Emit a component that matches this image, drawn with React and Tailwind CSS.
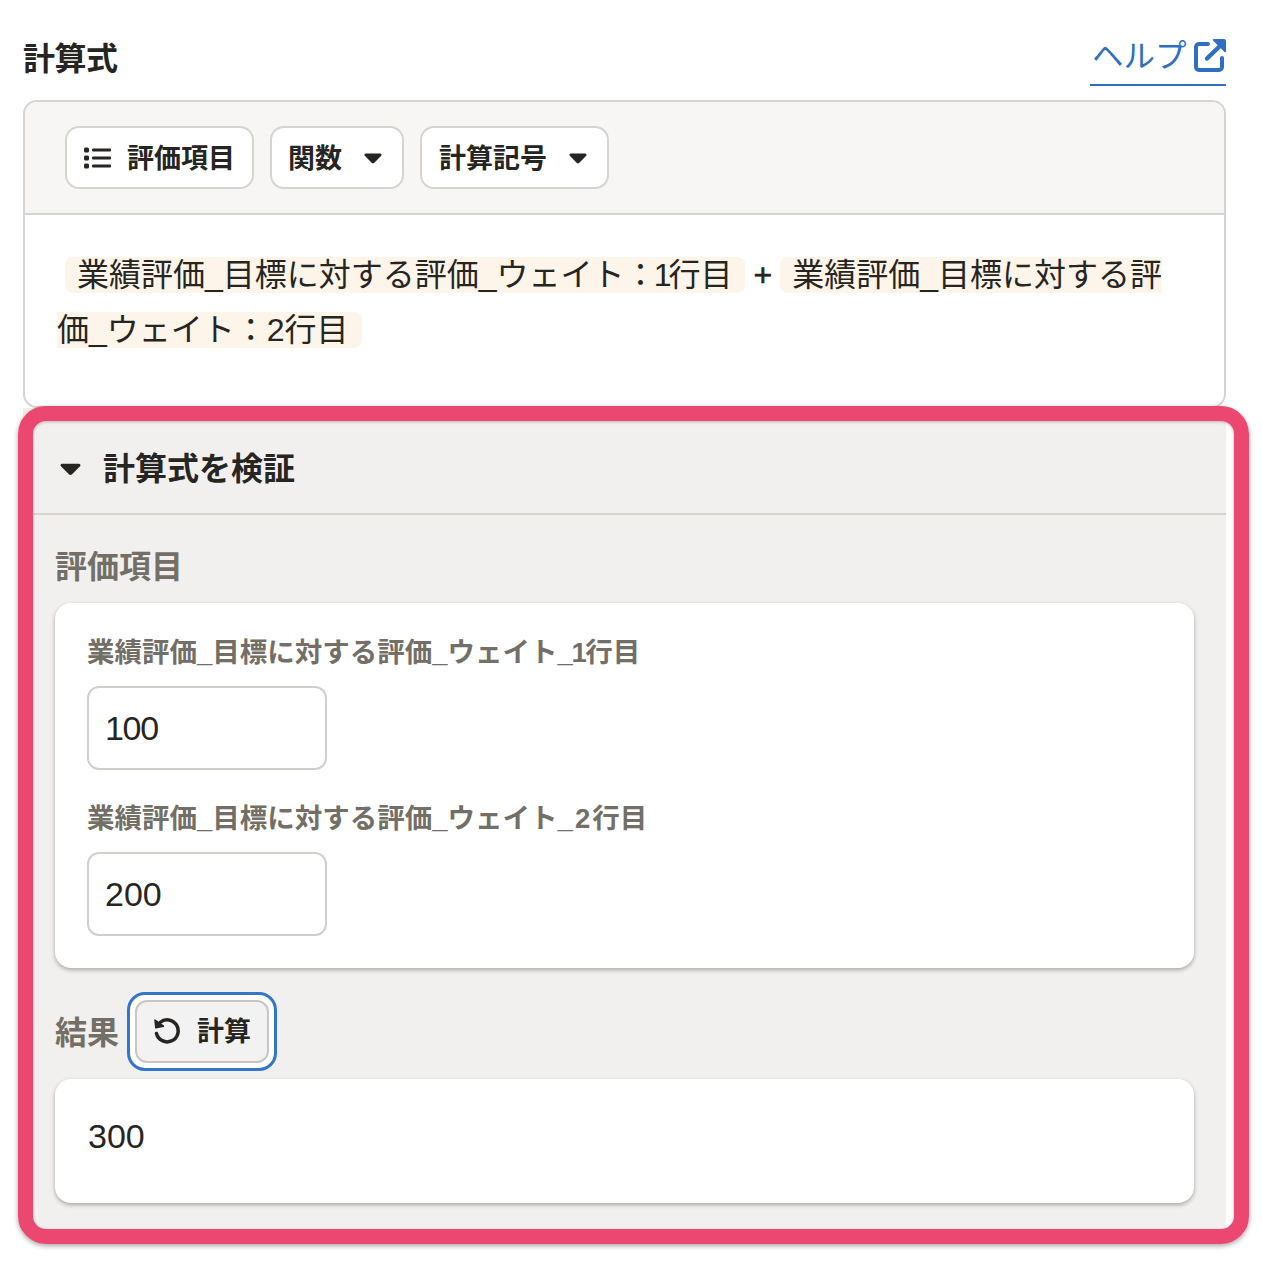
import React from "react";

const Caret = ({ className }) => (
  <svg className={className} viewBox="0 0 20 12" fill="currentColor">
    <path d="M2 0.5h16c1.4 0 2 1.5 1.1 2.5l-7.6 7.6c-.9.9-2.2.9-3 0L.9 3C0 2 .6.5 2 .5z" />
  </svg>
);

const ListIcon = () => (
  <svg className="w-[27px] h-[22px] text-[#262522] ml-px" viewBox="0 0 27 22" fill="currentColor">
    <rect x="0" y="0.5" width="5" height="5" rx="1.5" />
    <rect x="0" y="8.5" width="5" height="5" rx="1.5" />
    <rect x="0" y="16.5" width="5" height="5" rx="1.5" />
    <rect x="8" y="1.5" width="19" height="3" rx="1" />
    <rect x="8" y="9.5" width="19" height="3" rx="1" />
    <rect x="8" y="17.5" width="19" height="3" rx="1" />
  </svg>
);

const ExternalIcon = () => (
  <svg className="w-[32px] h-[33px] mb-[5px]" viewBox="0 0 32 33" fill="none" stroke="#2f6fc0" strokeLinecap="round" strokeLinejoin="round">
    <path d="M14 5H5A3 3 0 0 0 2 8v20a3 3 0 0 0 3 3h20a3 3 0 0 0 3-3v-9" strokeWidth="4" />
    <path d="M13 19.500 26 7" strokeWidth="4.500" />
    <path d="M19 1.500a1 1 0 0 1 1-1.500h10a2 2 0 0 1 2 2v10a1 1 0 0 1-1.500 1z" fill="#2f6fc0" stroke="none" />
  </svg>
);

const Tag = ({ children }) => (
  <span className="bg-[#fdf4ea] rounded-[8px] pl-[12px] pr-[13px]">{children}</span>
);

const Field = ({ label, digit, digitClass, value, inputClass }) => (
  <div className="flex flex-col">
    <div className="text-[27.500px] leading-[40px] font-bold text-[#736f67]">
      {label}
      <span className={digitClass}>{digit}</span>
      行目
    </div>
    <input
      readOnly
      value={value}
      className={`mt-[13px] w-[240px] h-[84px] border-2 border-[#d1cfcb] rounded-[12px] px-[16px] text-[34px] text-[#262522] bg-white outline-none ${inputClass}`}
    />
  </div>
);

export default function App() {
  return (
    <div className="w-[1262px] h-[1262px] bg-white pl-[23px] pr-[36px] pt-[32px] font-['Liberation_Sans','Noto_Sans_CJK_JP',sans-serif] text-[#262522]">
      <div className="flex items-start justify-between h-[68px]">
        <h2 className="text-[32px] leading-[54px] font-bold tracking-[-0.500px]">計算式</h2>
        <a className="flex items-center justify-between h-[54px] w-[136px] pl-[2px] border-b-2 border-[#2f6fc0] text-[#2f6fc0] text-[31.500px] font-normal">
          <span className="mb-[3px]">ヘルプ</span>
          <ExternalIcon />
        </a>
      </div>

      <div className="border-2 border-[#d7d4cf] rounded-[14px] h-[308px] overflow-hidden">
        <div className="flex items-center gap-[16px] h-[113px] bg-[#f7f6f4] border-b-2 border-[#d7d4cf] pl-[40px]">
          <button className="flex items-center h-[63px] w-[189px] bg-white border-2 border-[#d7d4cf] rounded-[14px] pl-[16px] text-[27px] font-bold">
            <ListIcon />
            <span className="ml-[16px] pt-[3px]">評価項目</span>
          </button>
          <button className="flex items-center h-[63px] w-[134px] bg-white border-2 border-[#d7d4cf] rounded-[14px] pl-[16px] text-[27px] font-bold">
            <span className="pt-[3px]">関数</span>
            <Caret className="ml-[22px] mt-[2px] w-[18px] h-[11px]" />
          </button>
          <button className="flex items-center h-[63px] w-[189px] bg-white border-2 border-[#d7d4cf] rounded-[14px] pl-[17px] text-[27px] font-bold">
            <span className="pt-[3px]">計算記号</span>
            <Caret className="ml-[22px] mt-[2px] w-[18px] h-[11px]" />
          </button>
        </div>
        <div className="pl-[32px] pr-[36px] pt-[33px] text-[32px] leading-[55px] font-normal">
          <span className="ml-[8px]" />
          <Tag>
            業績評価_目標に対する評価_ウェイト
            <span className="tracking-[-3px]">：</span>
            <span className="tracking-[-3px]">1</span>行目
          </Tag>
          <span className="mx-[8px] [-webkit-text-stroke:0.6px_#262522]">+</span>
          <Tag>業績評価_目標に対する評価_ウェイト：2行目</Tag>
        </div>
      </div>

      <div className="relative bg-[#f1f0ee] h-[824px]">
        <div className="flex items-center h-[107px] border-b-2 border-[#d7d4cf] pl-[37px] pt-[17px]">
          <Caret className="w-[21px] h-[13px]" />
          <span className="ml-[22px] text-[32px] font-bold">計算式を検証</span>
        </div>
        <div className="px-[32px]">
          <div className="mt-[31px] text-[32px] leading-[42px] font-bold text-[#736f67]">評価項目</div>
          <div className="mt-[15px] h-[365px] bg-white rounded-[16px] shadow-[0_2px_4px_rgba(0,0,0,0.3)] pl-[32px] pt-[30px] flex flex-col gap-[29px]">
            <Field label="業績評価_目標に対する評価_ウェイト_" digit="1" digitClass="-ml-[1.500px] tracking-[-1.500px]" value="100" inputClass="tracking-[-1.300px]" />
            <Field label="業績評価_目標に対する評価_ウェイト_" digit="2" digitClass="ml-[2px] tracking-[2px]" value="200" inputClass="" />
          </div>
          <div className="flex items-center mt-[24px] h-[78px]">
            <span className="text-[32px] font-bold text-[#736f67] pt-[3px]">結果</span>
            <span className="ml-[8px] p-[5px] border-[3px] border-[#3375c6] bg-white rounded-[18px]">
              <button className="flex items-center h-[63px] w-[134px] bg-[#f2f2f2] border-2 border-[#c9c6c1] rounded-[12px] pl-[16px] text-[27px] font-bold">
                <svg className="w-[28px] h-[28px]" viewBox="0 0 28 28" fill="none" stroke="#262522" strokeLinecap="round" strokeLinejoin="round">
                  <path d="M7 5.500a11 11 0 1 1-3.500 11" strokeWidth="3.500" />
                  <path d="M2 3l.8 7.800 7.700-1.600z" fill="#262522" strokeWidth="1.500" />
                </svg>
                <span className="ml-[16px] pt-[3px]">計算</span>
              </button>
            </span>
          </div>
          <div className="mt-[9px] h-[124px] bg-white rounded-[16px] shadow-[0_2px_4px_rgba(0,0,0,0.3)] pl-[33px] pt-[37px] text-[34px] leading-[40px]">
            300
          </div>
        </div>
        <div className="absolute left-[-5px] top-[-2px] right-[-23px] bottom-[-12px] border-[15px] border-[#eb4770] rounded-[28px] pointer-events-none shadow-[0_2px_5px_rgba(0,0,0,0.35),inset_0_1px_3px_rgba(0,0,0,0.25)]" />
      </div>
    </div>
  );
}
